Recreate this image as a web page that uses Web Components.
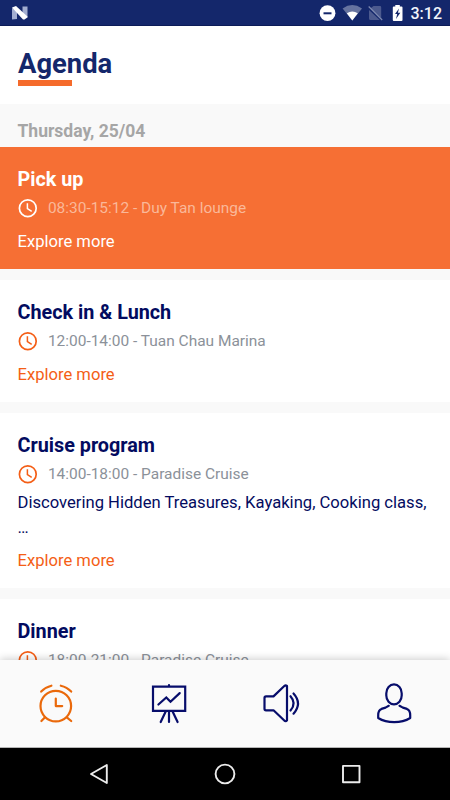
<!DOCTYPE html>
<html lang="en">
<head>
<meta charset="utf-8">
<title>Agenda</title>
<style>
body { margin: 0; width: 450px; height: 800px; overflow: hidden; font-family: Roboto, "Noto Sans", sans-serif; }
</style>
</head>
<body>
<agenda-app>
  <day-heading>Thursday, 25/04</day-heading>
  <event-card active heading="Pick up" meta="08:30-15:12 - Duy Tan lounge"></event-card>
  <event-card heading="Check in &amp; Lunch" meta="12:00-14:00 - Tuan Chau Marina"></event-card>
  <event-card heading="Cruise program" meta="14:00-18:00 - Paradise Cruise"><div>Discovering Hidden Treasures, Kayaking, Cooking class,</div><div>…</div></event-card>
  <event-card heading="Dinner" meta="18:00-21:00 - Paradise Cruise"></event-card>
</agenda-app>
<script>
const define = (name, html, setup) => customElements.define(name, class extends HTMLElement {
  connectedCallback() {
    if (this.shadowRoot) return;
    const root = this.attachShadow({ mode: 'open' });
    const t = document.createElement('template');
    t.innerHTML = html;
    root.append(t.content.cloneNode(true));
    if (setup) setup(this, root);
  }
});

define('status-bar', `
<style>
:host { display: flex; align-items: center; box-sizing: border-box; height: 26px; padding: 1px 8px 0 11px; background: #14276b; color: #f2f4fb; border-bottom: 1px solid #0c1c58; }
svg { display: block; flex: none; }
.space { flex: 1; }
.time { font-size: 16px; line-height: 24px; padding-top: 2px; font-weight: 500; margin-left: 7px; }
</style>
<svg width="18" height="16" viewBox="0 0 18 16"><path d="M1 3l5 2v9l-5 .5zM11.500 1.500l5 0v10l-5-1.500z" fill="#a3aed0"/><path d="M1 2.500L5 1l12 11-3.500 2.500H12z" fill="#fff"/></svg>
<span class="space"></span>
<svg width="86" height="20" viewBox="318 3 86 20">
<circle cx="327.500" cy="13.200" r="7.900" fill="#fff"/><path d="M323.500 13.300h8" stroke="#14276b" stroke-width="2"/>
<path d="M352.300 20.600L342.600 8.400Q352.300 1.800 362 8.400z" fill="#66739f"/><path d="M352.300 20.600L346.800 13.300Q352.300 9.700 357.800 13.300z" fill="#fff"/>
<path d="M373.500 6h6.500q1.200 0 1.200 1.200V18L370.300 8.600zM369 10l10.800 10H370.500q-1.500 0-1.500-1.500z" fill="#4c5a8e"/><path d="M368.700 6.500l13.500 13.500" stroke="#7d89b0" stroke-width="1.200"/>
<path d="M395.300 6.500V5h4.500v1.500h1.700q1 0 1 1v12.500q0 1-1 1h-7.700q-1 0-1-1V7.500q0-1 1-1z" fill="#fff"/><path d="M399 8.500l-4 5.500h2.200l-1.200 5 4.300-6.200h-2.400z" fill="#14276b"/>
</svg>
<span class="time">3:12</span>`);

define('page-header', `
<style>
:host { display: block; box-sizing: border-box; height: 78px; padding: 22px 18px 0; background: #fff; }
h1 { margin: 0; font-size: 27.4px; line-height: 32px; font-weight: 700; color: #14276b; }
i { display: block; width: 54px; height: 6px; background: #f56b2b; }
</style>
<h1><slot></slot></h1><i></i>`);

define('day-heading', `
<style>
:host { display: block; box-sizing: border-box; height: 43px; padding: 14px 17.5px 0; background: #f9f9f9; color: #a6a6a6; font-size: 17.5px; line-height: 26px; font-weight: 700; }
</style><slot></slot>`);

define('event-card', `
<style>
:host { display: block; box-sizing: border-box; height: 122px; padding: 21px 17.5px 0; margin-bottom: 11px; background: #fff; color: #030b60; --accent: #f45e16; --muted: #8b9199; }
:host([active]) { background: #f66f34; color: #fff; --accent: #fff; --muted: #fab899; }
:host([rich]) { height: 175px; }
h2 { margin: 0 0 2px; font-size: 19.8px; line-height: 24px; font-weight: 700; }
.meta { display: flex; align-items: center; gap: 10px; height: 28px; margin-left: -.6px; font-size: 15.46px; color: var(--muted); white-space: nowrap; }
svg { display: block; color: var(--accent); }
.meta span { line-height: 28px; }
.text { display: none; font-size: 16.62px; line-height: 25.5px; white-space: nowrap; margin-top: 1.5px; }
:host([rich]) .text { display: block; }
a { display: block; margin-top: 7.5px; font-size: 16.6px; line-height: 24px; color: var(--accent); }
:host([rich]) a { margin-top: 8.5px; }
</style>
<h2></h2>
<div class="meta"><svg width="21" height="21" viewBox="0 0 21 21" fill="none" stroke="currentColor" stroke-width="1.700"><circle cx="10.800" cy="10.200" r="8.400"/><path d="M10.400 5.300v5.200l4.300 2.900" stroke-width="1.500"/></svg><span></span></div>
<div class="text"><slot></slot></div>
<a>Explore more</a>`, (host, root) => {
  root.querySelector('h2').textContent = host.getAttribute('heading');
  root.querySelector('.meta span').textContent = host.getAttribute('meta');
  host.toggleAttribute('rich', host.children.length > 0);
});

define('tab-icon', `
<style>
:host { display: flex; flex: 1; align-items: center; justify-content: center; color: #070d6b; }
:host([active]) { color: #ea690b; }
svg { display: block; fill: none; stroke: currentColor; stroke-width: 2.200; stroke-linecap: round; stroke-linejoin: round; overflow: visible; }
</style><svg width="40" height="40" viewBox="-20 -20 40 40"></svg>`, (host, root) => {
  root.querySelector('svg').innerHTML = {
    alarm: '<circle cx="-.2" cy="2.100" r="15.300"/><path d="M-.2-5.500V2.100H6.200M-14.800-12.400Q-10.500-16.900-4.600-18.300M4.800-18.300Q10.900-16.900 15.200-12.400M-11 13.300L-14.600 17M10.800 13.300L15.200 17"/>',
    board: '<path d="M-16-17.300H16.200V6.900H-16zM0-17.500V-18.800M-10.600 .5L-2.700-6.500 1.500-2.200 10.700-10.900M-3.300 7.500L-8.300 18M0 7.500V18M3.600 7.500L8.600 18" stroke-linejoin="miter"/>',
    speaker: '<path d="M-15-7.600H-7.500L3.300-18Q4.600-19 6-18V16.300Q4.600 18.100 3.300 16.500L-7.500 6.300H-15Q-16.500 6.300-16.500 4.800V-6.100Q-16.500-7.600-15-7.600zM9.500-7.800Q15.800-.7 9.500 6.500M12.500-10.500Q21.500-.5 12.500 9.700"/>',
    person: '<rect x="-7.700" y="-19.600" width="15.400" height="20" rx="7.700" ry="8.800"/><path d="M-5.200 1.800L-8.500 3.600-12.500 4.900Q-15.800 6.300-15.800 11V14Q-9 18.200 .2 18.200 9.400 18.200 16.200 14V11Q16.200 6.300 12.900 4.900L8.900 3.600 5.500 1.800"/>'
  }[host.getAttribute('name')];
});

define('tab-bar', `
<style>
:host { display: flex; position: relative; box-sizing: border-box; height: 88px; background: #fafafa; border-bottom: 1px solid #b5b5b5; box-shadow: 0 -1px 8px rgba(0,0,0,.2); }
</style>
<tab-icon name="alarm" active></tab-icon><tab-icon name="board"></tab-icon><tab-icon name="speaker"></tab-icon><tab-icon name="person"></tab-icon>`);

define('system-bar', `
<style>
:host { display: flex; position: relative; box-sizing: border-box; height: 52px; padding: 0 36px; background: #000; }
span { flex: 1; display: flex; align-items: center; justify-content: center; }
svg { fill: none; stroke: #ececec; stroke-width: 1.900; stroke-linejoin: round; }
</style>
<span><svg width="24" height="24" viewBox="-12 -12 24 24"><path d="M-8 0L7.800-9V9z"/></svg></span>
<span><svg width="24" height="24" viewBox="-12 -12 24 24"><circle r="9.400"/></svg></span>
<span><svg width="24" height="24" viewBox="-12 -12 24 24"><path d="M-8-8.100H8.500V8.300H-8z"/></svg></span>`);

define('agenda-app', `
<style>
:host { display: flex; flex-direction: column; height: 800px; background: #f9f9f9; }
main { flex: 1; min-height: 0; overflow: hidden; }
status-bar, page-header, tab-bar, system-bar { flex: none; }
</style>
<status-bar></status-bar><page-header>Agenda</page-header>
<main><slot></slot></main>
<tab-bar></tab-bar><system-bar></system-bar>`);
</script>
</body>
</html>
